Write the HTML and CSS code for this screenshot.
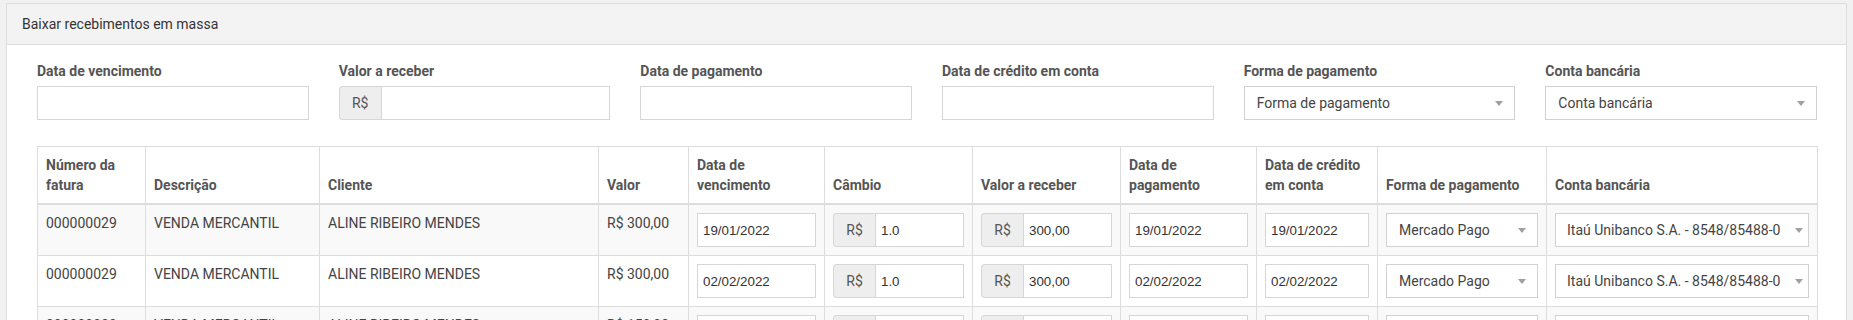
FILE: index.html
```html
<!DOCTYPE html>
<html lang="pt-BR">
<head>
    <meta charset="UTF-8">
    <title>Baixar recebimentos em massa</title>
    <link rel="stylesheet" href="styles.css">
</head>
<body>
<div class="panel">
    <div class="panel-heading">Baixar recebimentos em massa</div>
    <div class="panel-body">
        <div class="filters">
            <div class="field">
                <label>Data de vencimento</label>
                <input class="form-control" type="text">
            </div>
            <div class="field">
                <label>Valor a receber</label>
                <div class="input-group">
                    <span class="addon">R$</span>
                    <input class="form-control" type="text">
                </div>
            </div>
            <div class="field">
                <label>Data de pagamento</label>
                <input class="form-control" type="text">
            </div>
            <div class="field">
                <label>Data de crédito em conta</label>
                <input class="form-control" type="text">
            </div>
            <div class="field">
                <label>Forma de pagamento</label>
                <div class="select"><span>Forma de pagamento</span><b class="caret"></b></div>
            </div>
            <div class="field">
                <label>Conta bancária</label>
                <div class="select"><span>Conta bancária</span><b class="caret"></b></div>
            </div>
        </div>

        <table class="grid">
            <colgroup>
                <col style="width:108px"><col style="width:174px"><col style="width:279px"><col style="width:90px">
                <col style="width:136px"><col style="width:148px"><col style="width:148px"><col style="width:136px">
                <col style="width:121px"><col style="width:169px"><col style="width:271px">
            </colgroup>
            <thead>
                <tr>
                    <th>Número da fatura</th>
                    <th>Descrição</th>
                    <th>Cliente</th>
                    <th>Valor</th>
                    <th>Data de vencimento</th>
                    <th>Câmbio</th>
                    <th>Valor a receber</th>
                    <th>Data de pagamento</th>
                    <th>Data de crédito em conta</th>
                    <th>Forma de pagamento</th>
                    <th>Conta bancária</th>
                </tr>
            </thead>
            <tbody>
                <tr>
                    <td>000000029</td>
                    <td>VENDA MERCANTIL</td>
                    <td>ALINE RIBEIRO MENDES</td>
                    <td>R$ 300,00</td>
                    <td><input class="form-control" type="text" value="19/01/2022"></td>
                    <td><div class="input-group"><span class="addon">R$</span><input class="form-control" type="text" value="1.0"></div></td>
                    <td><div class="input-group"><span class="addon">R$</span><input class="form-control" type="text" value="300,00"></div></td>
                    <td><input class="form-control" type="text" value="19/01/2022"></td>
                    <td><input class="form-control" type="text" value="19/01/2022"></td>
                    <td><div class="select"><span>Mercado Pago</span><b class="caret"></b></div></td>
                    <td><div class="select tight"><span>Itaú Unibanco S.A. - 8548/85488-0</span><b class="caret"></b></div></td>
                </tr>
                <tr>
                    <td>000000029</td>
                    <td>VENDA MERCANTIL</td>
                    <td>ALINE RIBEIRO MENDES</td>
                    <td>R$ 300,00</td>
                    <td><input class="form-control" type="text" value="02/02/2022"></td>
                    <td><div class="input-group"><span class="addon">R$</span><input class="form-control" type="text" value="1.0"></div></td>
                    <td><div class="input-group"><span class="addon">R$</span><input class="form-control" type="text" value="300,00"></div></td>
                    <td><input class="form-control" type="text" value="02/02/2022"></td>
                    <td><input class="form-control" type="text" value="02/02/2022"></td>
                    <td><div class="select"><span>Mercado Pago</span><b class="caret"></b></div></td>
                    <td><div class="select tight"><span>Itaú Unibanco S.A. - 8548/85488-0</span><b class="caret"></b></div></td>
                </tr>
                <tr>
                    <td>000000030</td>
                    <td>VENDA MERCANTIL</td>
                    <td>ALINE RIBEIRO MENDES</td>
                    <td>R$ 150,00</td>
                    <td><input class="form-control" type="text" value="02/03/2022"></td>
                    <td><div class="input-group"><span class="addon">R$</span><input class="form-control" type="text" value="1.0"></div></td>
                    <td><div class="input-group"><span class="addon">R$</span><input class="form-control" type="text" value="150,00"></div></td>
                    <td><input class="form-control" type="text" value="02/03/2022"></td>
                    <td><input class="form-control" type="text" value="02/03/2022"></td>
                    <td><div class="select"><span>Mercado Pago</span><b class="caret"></b></div></td>
                    <td><div class="select tight"><span>Itaú Unibanco S.A. - 8548/85488-0</span><b class="caret"></b></div></td>
                </tr>
            </tbody>
        </table>
    </div>
</div>
</body>
</html>
```

FILE: styles.css
```css
html, body {
  margin: 0;
  background: #f1f1f1;
  font-family: Roboto, "Liberation Sans", sans-serif;
  font-size: 14px;
  line-height: 20px;
  color: #444;
}
.panel {
  margin: 3px 6px 0 6px;
  background: #fff;
  border: 1px solid #ddd;
  border-bottom: 0;
}
.panel-heading {
  background: #f3f3f3;
  border-bottom: 1px solid #ddd;
  padding: 10px 15px;
  color: #333;
}
.panel-body {
  padding: 16px 29px 0 30px;
}
.filters {
  display: grid;
  grid-template-columns: repeat(6, 1fr);
  column-gap: 30px;
  margin-bottom: 26px;
}
.field label {
  display: block;
  font-weight: bold;
  color: #555;
  margin-bottom: 5px;
}
.form-control {
  display: block;
  box-sizing: border-box;
  width: 100%;
  height: 34px;
  margin: 0;
  padding: 6px 5px;
  border: 1px solid #d6d6d6;
  border-radius: 0;
  background: #fff;
  font-family: "Liberation Sans", Arial, sans-serif;
  font-size: 13.333px;
  color: #333;
  outline: none;
}
.input-group {
  display: flex;
}
.input-group .addon {
  flex: 0 0 auto;
  box-sizing: border-box;
  width: 42px;
  height: 34px;
  padding: 6px 0;
  text-align: center;
  background: #eee;
  border: 1px solid #d6d6d6;
  border-right: 0;
  border-radius: 4px 0 0 4px;
  color: #555;
}
.input-group .form-control {
  flex: 1;
  min-width: 0;
}
.select {
  box-sizing: border-box;
  height: 34px;
  border: 1px solid #d2d2d2;
  background: #fff;
  display: flex;
  align-items: center;
  padding: 0 11px 0 12px;
  color: #444;
}
.select span {
  flex: 1;
  white-space: nowrap;
  overflow: hidden;
}
.select.tight {
  padding-left: 11px;
  padding-right: 5px;
}
.caret {
  width: 0;
  height: 0;
  border-style: solid;
  border-width: 5px 4px 0 4px;
  border-color: #a0a0a0 transparent transparent transparent;
  margin-left: 4px;
}
.grid {
  width: 100%;
  table-layout: fixed;
  border-collapse: collapse;
}
.grid th, .grid td {
  border: 1px solid #ddd;
  padding: 8px;
  text-align: left;
}
.grid th {
  vertical-align: bottom;
  font-weight: bold;
  color: #555;
  border-bottom: 2px solid #ddd;
}
.grid td {
  vertical-align: top;
  height: 34px;
}
.grid tbody tr:nth-child(odd) {
  background: #f9f9f9;
}
```
